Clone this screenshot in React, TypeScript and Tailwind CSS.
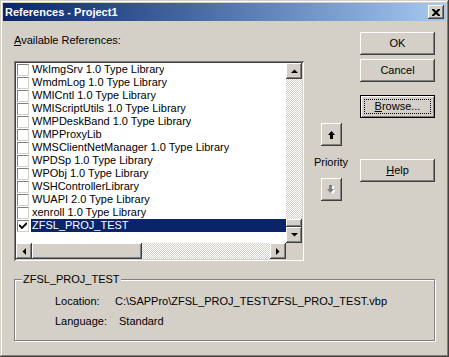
import React from 'react';

const raised =
  'bg-[#d4d0c8] shadow-[inset_-1px_-1px_#404040,inset_1px_1px_#fff,inset_-2px_-2px_#808080,inset_2px_2px_#d4d0c8]';

const items = [
  'WkImgSrv 1.0 Type Library',
  'WmdmLog 1.0 Type Library',
  'WMICntl 1.0 Type Library',
  'WMIScriptUtils 1.0 Type Library',
  'WMPDeskBand 1.0 Type Library',
  'WMPProxyLib',
  'WMSClientNetManager 1.0 Type Library',
  'WPDSp 1.0 Type Library',
  'WPObj 1.0 Type Library',
  'WSHControllerLibrary',
  'WUAPI 2.0 Type Library',
  'xenroll 1.0 Type Library',
  'ZFSL_PROJ_TEST',
];

const Tri = ({ dir }: { dir: 'up' | 'down' | 'left' | 'right' }) => {
  const d = {
    up: 'M0 4 L3.5 0.5 L7 4 Z',
    down: 'M0 0 L7 0 L3.5 3.5 Z',
    left: 'M4 0 L4 7 L0.5 3.5 Z',
    right: 'M0 0 L0 7 L3.5 3.5 Z',
  }[dir];
  const w = dir === 'up' || dir === 'down' ? 7 : 4;
  const h = dir === 'up' || dir === 'down' ? 4 : 7;
  return (
    <svg width={w} height={h} viewBox={`0 0 ${w} ${h}`}>
      <path d={d} fill="#000" />
    </svg>
  );
};

const ScrollBtn = ({ dir }: { dir: 'up' | 'down' | 'left' | 'right' }) => (
  <div className={`w-[16px] h-[16px] shrink-0 flex items-center justify-center ${raised}`}>
    <Tri dir={dir} />
  </div>
);

const Button = ({ children }: { children: React.ReactNode }) => (
  <div className={`w-[75px] h-[23px] flex items-center justify-center ${raised}`}>{children}</div>
);

export default function App() {
  return (
    <div
      className="w-[449px] h-[357px] bg-[#d4d0c8] p-[3px] flex flex-col text-[11px] leading-[13px] text-black shadow-[inset_-1px_-1px_#404040,inset_1px_1px_#d4d0c8,inset_-2px_-2px_#808080,inset_2px_2px_#fff]"
      style={{ fontFamily: '"Liberation Sans", Arial, sans-serif' }}
    >
      {/* title bar */}
      <div className="h-[18px] shrink-0 flex items-center justify-between pl-[2px] pr-[2px] bg-linear-to-r from-[#0a246a] to-[#a6caf0]">
        <span className="font-bold text-white">References - Project1</span>
        <div className={`w-[16px] h-[14px] flex items-center justify-center ${raised}`}>
          <svg width="8" height="7" viewBox="0 0 8 7">
            <path d="M0 0h2l2 2 2-2h2v1L5.5 3.5 8 6v1H6L4 5 2 7H0V6l2.5-2.5L0 1z" fill="#000" />
          </svg>
        </div>
      </div>

      <div className="flex-1 flex flex-col px-[11px] pt-[11px]">
        <div className="flex">
          {/* left column */}
          <div className="w-[290px] flex flex-col">
            <div className="h-[29px] pt-[2px]">
              <span className="underline underline-offset-[1px]">A</span>vailable References:
            </div>
            <div className="w-[290px] h-[200px] p-[2px] bg-white shadow-[inset_1px_1px_#808080,inset_-1px_-1px_#fff,inset_2px_2px_#404040,inset_-2px_-2px_#d4d0c8]">
              <div className="flex h-[180px]">
                <div className="w-[270px] bg-white">
                  {items.map((it, i) => {
                    const sel = i === items.length - 1;
                    return (
                      <div key={it} className="h-[13px] flex items-center">
                        <div className="ml-[1px] w-[12px] h-[12px] bg-white border-t border-l border-[#808080] border-r-[#d4d0c8] border-b-[#d4d0c8] border-r border-b flex items-center justify-center">
                          {sel && (
                            <svg width="8" height="7" viewBox="0 0 8 7">
                              <path d="M0 3 L3 6 L8 1" stroke="#000" strokeWidth="1.8" fill="none" />
                            </svg>
                          )}
                        </div>
                        <div
                          className={`ml-[2px] pl-[1px] h-[13px] whitespace-nowrap overflow-hidden ${
                            sel ? 'flex-1 bg-[#0a246a] text-white' : ''
                          }`}
                        >
                          {it}
                        </div>
                      </div>
                    );
                  })}
                </div>
                <div className="w-[16px] flex flex-col">
                  <ScrollBtn dir="up" />
                  <div className="flex-1 bg-[image:repeating-conic-gradient(#fff_0_25%,#d4d0c8_0_50%)] bg-[length:2px_2px]" />
                  <div className={`h-[8px] ${raised}`} />
                  <ScrollBtn dir="down" />
                </div>
              </div>
              <div className="flex h-[16px]">
                <ScrollBtn dir="left" />
                <div className={`w-[110px] ${raised}`} />
                <div className="flex-1 bg-[image:repeating-conic-gradient(#fff_0_25%,#d4d0c8_0_50%)] bg-[length:2px_2px]" />
                <ScrollBtn dir="right" />
                <div className="w-[16px] bg-[#d4d0c8]" />
              </div>
            </div>
          </div>

          {/* priority column */}
          <div className="ml-[7px] w-[40px] flex flex-col items-center pt-[91px]">
            <div className={`w-[21px] h-[23px] flex items-center justify-center ${raised}`}>
              <svg width="7" height="8" viewBox="0 0 7 8">
                <path d="M3.5 0 L7 4 H5 V8 H2 V4 H0 Z" fill="#000" />
              </svg>
            </div>
            <div className="h-[32px] flex items-center">Priority</div>
            <div className={`w-[21px] h-[23px] flex items-center justify-center ${raised}`}>
              <svg width="8" height="9" viewBox="0 0 8 9">
                <path d="M3 0 H6 V4 H8 L4.5 8 L1 4 H3 Z" fill="#fff" transform="translate(1 1)" />
                <path d="M2 0 H5 V4 H7 L3.5 8 L0 4 H2 Z" fill="#808080" />
              </svg>
            </div>
          </div>

          {/* buttons */}
          <div className="ml-[9px] w-[75px] flex flex-col">
            <Button>OK</Button>
            <div className="mt-[4px]">
              <Button>Cancel</Button>
            </div>
            <div className="mt-[13px] w-[75px] h-[23px] p-[3px] border border-black bg-[#d4d0c8] shadow-[inset_1px_1px_#fff,inset_-1px_-1px_#808080]">
              <div className="h-full border border-dotted border-black flex items-center justify-center">
                <span>
                  <span className="underline underline-offset-[1px]">B</span>rowse...
                </span>
              </div>
            </div>
            <div className="mt-[41px]">
              <Button>
                <span>
                  <span className="underline underline-offset-[1px]">H</span>elp
                </span>
              </Button>
            </div>
          </div>
        </div>

        {/* group box */}
        <div className="relative mt-[18px] w-[421px] h-[62px] border border-[#808080] shadow-[inset_1px_1px_#fff,1px_1px_#fff] pl-[40px] pt-[15px]">
          <div className="absolute left-[7px] -top-[7px] px-[1px] bg-[#d4d0c8]">ZFSL_PROJ_TEST</div>
          <div className="flex">
            <div className="w-[60px]">Location:</div>
            <div>C:\SAPPro\ZFSL_PROJ_TEST\ZFSL_PROJ_TEST.vbp</div>
          </div>
          <div className="flex mt-[7px]">
            <div className="w-[64px]">Language:</div>
            <div>Standard</div>
          </div>
        </div>
      </div>
    </div>
  );
}
